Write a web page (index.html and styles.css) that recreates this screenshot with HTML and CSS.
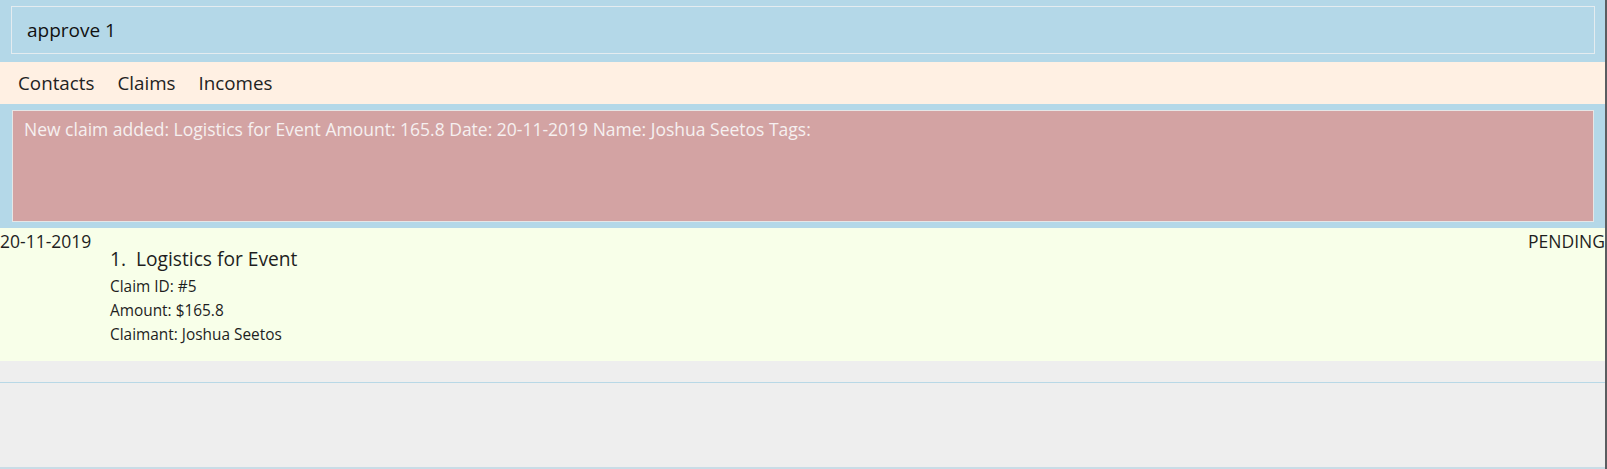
FILE: index.html
```html
<!DOCTYPE html>
<html>
<head>
<meta charset="utf-8">
<link rel="stylesheet" href="styles.css">
</head>
<body>
<div class="app">
  <div class="main">
    <div class="command-bar">
      <div class="command-box">approve 1</div>
    </div>
    <div class="menu-bar">
      <span class="menu-item">Contacts</span>
      <span class="menu-item">Claims</span>
      <span class="menu-item">Incomes</span>
    </div>
    <div class="result-bar">
      <div class="result-box">New claim added: Logistics for Event Amount: 165.8 Date: 20-11-2019 Name: Joshua Seetos Tags:</div>
    </div>
    <div class="card">
      <div class="card-top">
        <span class="card-date">20-11-2019</span>
        <span class="card-status">PENDING</span>
      </div>
      <div class="card-body">
        <div class="card-title">1.&nbsp; Logistics for Event</div>
        <div class="card-details">
          <div class="card-line">Claim ID: #5</div>
          <div class="card-line">Amount: $165.8</div>
          <div class="card-line">Claimant: Joshua Seetos</div>
        </div>
      </div>
    </div>
    <div class="list-rest"></div>
    <div class="status-area"></div>
  </div>
  <div class="edge"></div>
</div>
</body>
</html>
```
FILE: styles.css
```css
html, body {
  margin: 0;
  padding: 0;
  height: 100%;
  overflow: hidden;
}
body {
  font-family: "Open Sans", "Noto Sans", sans-serif;
  background: #eeeeee;
}
.app {
  display: flex;
  height: 469px;
}
.main {
  flex: 1;
  display: flex;
  flex-direction: column;
  min-width: 0;
}
.edge {
  width: 2px;
  background: #5b5d60;
}
.command-bar {
  background: #b4d8e8;
  height: 62px;
  box-sizing: border-box;
  padding: 6px 10px 0 11px;
}
.command-box {
  height: 48px;
  box-sizing: border-box;
  border: 1px solid #e4ecf0;
  padding-left: 15px;
  display: flex;
  align-items: center;
  font-size: 19px;
  color: #111;
}
.menu-bar {
  background: #fff0e3;
  height: 42px;
  display: flex;
  align-items: center;
  padding-left: 18px;
  gap: 23px;
  font-size: 18.8px;
  color: #222;
}
.result-bar {
  background: #b4d8e8;
  height: 124px;
  box-sizing: border-box;
  padding: 6px 11px 6px 12px;
}
.result-box {
  height: 100%;
  box-sizing: border-box;
  border: 1px solid #e6e6e6;
  background: #d3a3a3;
  padding: 6px 0 0 11px;
  color: #f6f0f0;
  font-size: 17.5px;
}
.card {
  background: #f8ffe9;
  height: 133px;
  color: #1e1e1e;
}
.card-top {
  display: flex;
  justify-content: space-between;
  padding-top: 2px;
  font-size: 17.5px;
  line-height: 22px;
}
.card-body {
  padding-left: 110px;
}
.card-title {
  font-size: 19.2px;
  line-height: 24px;
  margin-top: -5px;
}
.card-details {
  margin-top: 4px;
}
.card-line {
  font-size: 15.4px;
  line-height: 24px;
}
.list-rest {
  height: 21px;
  border-bottom: 1px solid #b8d8e6;
}
.status-area {
  flex: 1;
  border-bottom: 2px solid #c9dce6;
}
```
